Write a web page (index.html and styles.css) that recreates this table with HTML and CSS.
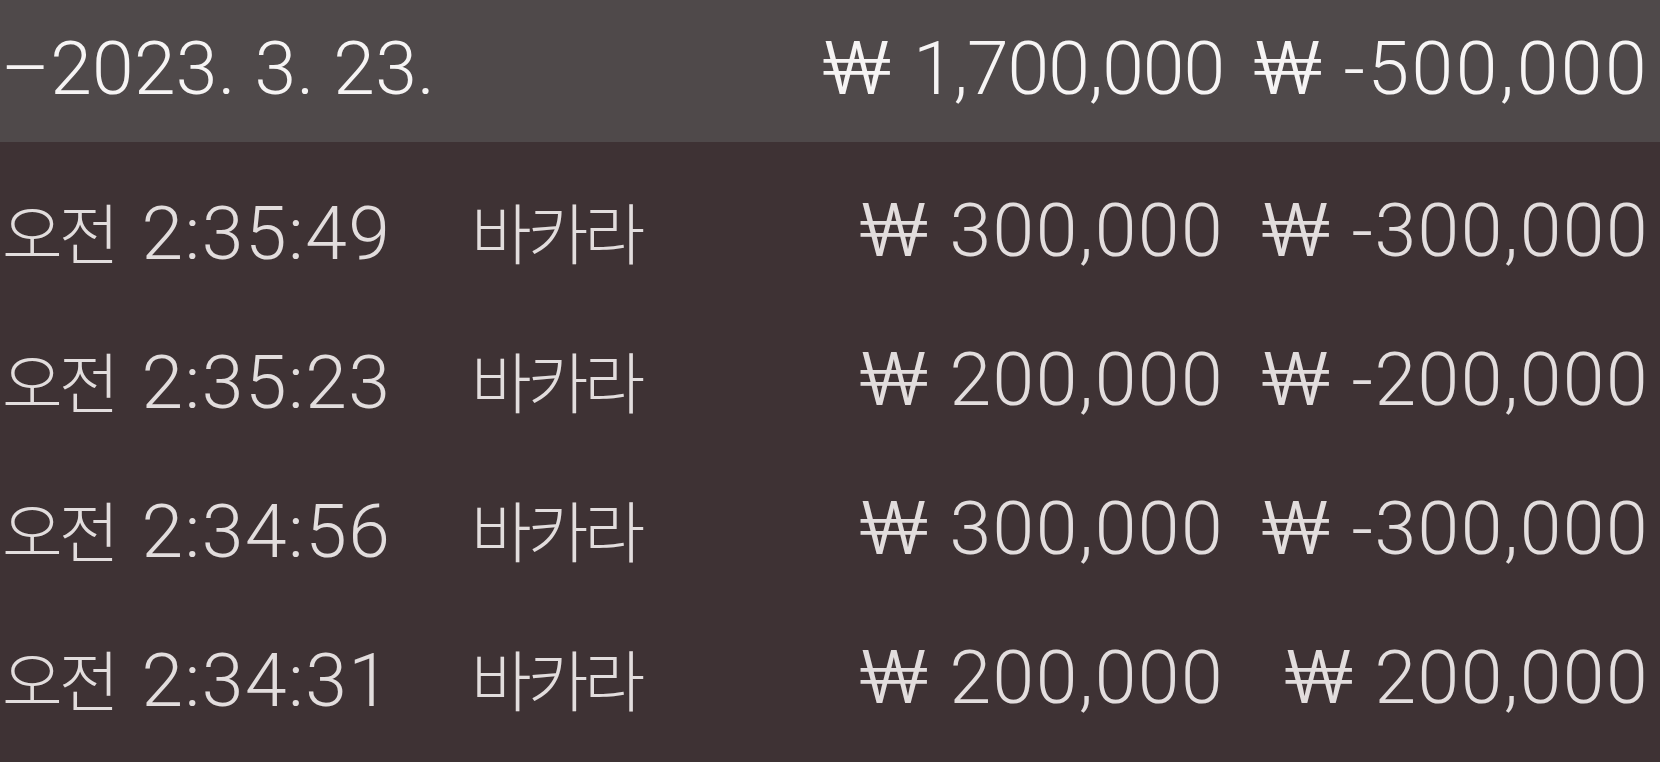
FILE: index.html
```html
<!DOCTYPE html>
<html lang="ko">
<head>
<meta charset="utf-8">
<title>Ledger</title>
<link rel="stylesheet" href="styles.css">
</head>
<body>
<div class="ledger">
  <div class="row head">
    <div class="date">–2023. 3. 23.</div>
    <div class="amt total"><span class="won">₩</span>1,700,000</div>
    <div class="amt net"><span class="won">₩</span>-500,000</div>
  </div>
  <div class="list">
    <div class="row item">
      <div class="time"><span class="ko">오전</span>2:35:49</div>
      <div class="game"><span class="ko">바카라</span></div>
      <div class="amt"><span class="won">₩</span>300,000</div>
      <div class="amt"><span class="won">₩</span>-300,000</div>
    </div>
    <div class="row item">
      <div class="time"><span class="ko">오전</span>2:35:23</div>
      <div class="game"><span class="ko">바카라</span></div>
      <div class="amt"><span class="won">₩</span>200,000</div>
      <div class="amt"><span class="won">₩</span>-200,000</div>
    </div>
    <div class="row item">
      <div class="time"><span class="ko">오전</span>2:34:56</div>
      <div class="game"><span class="ko">바카라</span></div>
      <div class="amt"><span class="won">₩</span>300,000</div>
      <div class="amt"><span class="won">₩</span>-300,000</div>
    </div>
    <div class="row item">
      <div class="time"><span class="ko">오전</span>2:34:31</div>
      <div class="game"><span class="ko">바카라</span></div>
      <div class="amt"><span class="won">₩</span>200,000</div>
      <div class="amt"><span class="won">₩</span>200,000</div>
    </div>
  </div>
</div>
</body>
</html>
```

FILE: styles.css
```css
html, body {
  margin: 0;
  padding: 0;
  background: #3e3234;
}
body {
  width: 1660px;
  height: 762px;
  overflow: hidden;
  font-family: "Roboto", "Noto Sans CJK KR", sans-serif;
  font-weight: 300;
  font-size: 75px;
  letter-spacing: 1.5px;
}
.ledger {
  display: flex;
  flex-direction: column;
}
.row {
  display: grid;
  grid-template-columns: 471px 1fr 460px 425px;
  padding-right: 11px;
  white-space: nowrap;
}
.head {
  height: 142px;
  line-height: 136px;
  background: #4f494a;
  color: #f6f4f4;
}
.head .date {
  grid-column: 1 / 3;
  padding-left: 1px;
  letter-spacing: 0.3px;
}
.head .total {
  letter-spacing: -1px;
}
.head .net {
  letter-spacing: 2.5px;
}
.list {
  display: flex;
  flex-direction: column;
  padding-top: 14px;
  color: #e2dddd;
}
.item {
  height: 149px;
  line-height: 149px;
}
.time {
  padding-left: 2px;
}
.time .ko {
  margin-right: 26px;
}
.amt {
  text-align: right;
}
.won {
  display: inline-block;
  transform: scaleX(1.22);
  transform-origin: left center;
  margin-right: 34px;
  letter-spacing: 0;
}
.ko {
  font-family: "Noto Sans CJK KR", sans-serif;
  font-weight: 300;
  font-size: 66px;
  letter-spacing: -4px;
}
```
